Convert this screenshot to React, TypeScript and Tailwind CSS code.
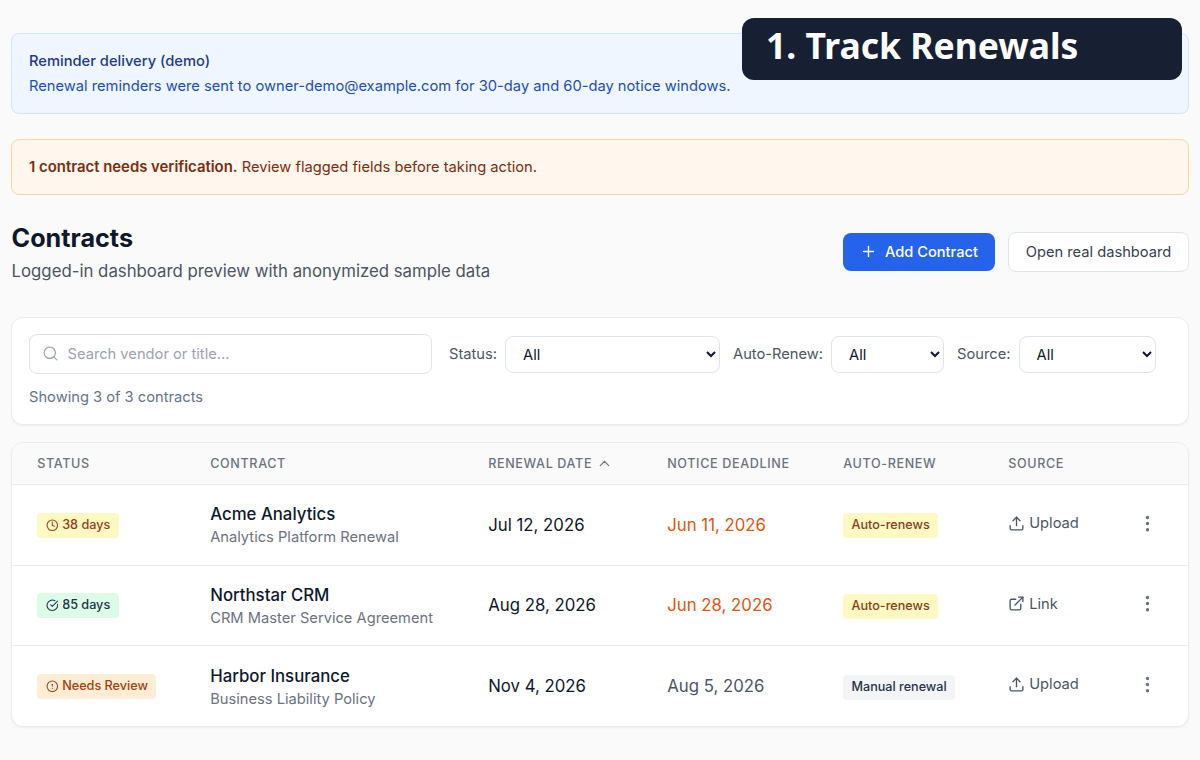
import {
  ChevronUp,
  CircleAlert,
  CircleCheckBig,
  Clock,
  EllipsisVertical,
  ExternalLink,
  Plus,
  Search,
  Upload,
} from 'lucide-react';

const contracts = [
  {
    status: '38 days',
    StatusIcon: Clock,
    statusClass: 'bg-[#fef9c3] text-[#964219]',
    name: 'Acme Analytics',
    title: 'Analytics Platform Renewal',
    renewal: 'Jul 12, 2026',
    deadline: 'Jun 11, 2026',
    deadlineClass: 'text-[#e0560f]',
    renew: 'Auto-renews',
    renewClass: 'bg-[#fef9c3] text-[#854020]',
    source: 'Upload',
    SourceIcon: Upload,
  },
  {
    status: '85 days',
    StatusIcon: CircleCheckBig,
    statusClass: 'bg-[#dcfce7] text-[#26324a]',
    name: 'Northstar CRM',
    title: 'CRM Master Service Agreement',
    renewal: 'Aug 28, 2026',
    deadline: 'Jun 28, 2026',
    deadlineClass: 'text-[#e0560f]',
    renew: 'Auto-renews',
    renewClass: 'bg-[#fef9c3] text-[#854020]',
    source: 'Link',
    SourceIcon: ExternalLink,
  },
  {
    status: 'Needs Review',
    StatusIcon: CircleAlert,
    statusClass: 'bg-[#ffedd5] text-[#a3410f]',
    name: 'Harbor Insurance',
    title: 'Business Liability Policy',
    renewal: 'Nov 4, 2026',
    deadline: 'Aug 5, 2026',
    deadlineClass: 'text-[#4b5563]',
    renew: 'Manual renewal',
    renewClass: 'bg-[#f3f4f6] text-[#26324a]',
    source: 'Upload',
    SourceIcon: Upload,
  },
];

const columns = 'grid grid-cols-[173px_278px_179px_176px_165px_1fr] pl-[25.2px]';

function Filter({ label, className }: { label: string; className: string }) {
  return (
    <label className="flex items-center text-[14.7px] text-[#4b5563]">
      <span className="pt-px">{label}</span>
      <select
        className={`h-[37px] rounded-lg border border-[#dfe3ea] bg-white pt-px pl-[13px] text-[14.7px] text-[#0f172a] ${className}`}
      >
        <option>All</option>
      </select>
    </label>
  );
}

export default function App() {
  return (
    <main className="relative h-[760px] w-[1200px] overflow-hidden bg-[#fafafa] px-[11px] pt-[33px] font-['Inter',sans-serif] text-[#0f172a]">
      <div className="absolute top-[18px] left-[742px] h-[62px] w-[440px] rounded-xl bg-[#172032] pl-[24px] font-['Noto_Sans',sans-serif] text-[35.5px] leading-[55px] font-bold text-white">
        1. Track Renewals
      </div>

      <div className="h-[81px] rounded-lg border border-[#cfe5fd] bg-[#eff6ff] px-[17px] pt-[17px] text-[14.7px] leading-[21px]">
        <p className="font-medium text-[#1e3a8a]">Reminder delivery (demo)</p>
        <p className="mt-1 text-[#1e4fb8]">
          Renewal reminders were sent to owner-demo@example.com for 30-day and 60-day notice windows.
        </p>
      </div>

      <div className="mt-[25px] h-[56px] rounded-lg border border-[#fbd5a0] bg-[#fff7ed] px-[17px] pt-[17px] text-[14.7px] leading-[21px] text-[#7c2d12]">
        <span className="text-[14.9px] font-semibold">1 contract needs verification.</span> Review flagged fields before taking action.
      </div>

      <div className="mt-[26px] flex h-[96px] items-start justify-between">
        <div className="pt-px pl-[0.5px]">
          <h1 className="text-[25.2px] leading-[33px] font-bold">Contracts</h1>
          <p className="mt-1 text-[16.8px] leading-[25px] text-[#4b5563]">
            Logged-in dashboard preview with anonymized sample data
          </p>
        </div>
        <div className="mt-[11px] flex items-center gap-[13px]">
          <button className="flex h-[38px] w-[152px] items-center rounded-lg bg-[#2563eb] pl-[17px] text-[14.64px] font-medium text-white">
            <Plus size={17} strokeWidth={1.9} className="mr-[8px] mb-px" />
            <span className="pt-px">Add Contract</span>
          </button>
          <button className="h-[40px] w-[181px] rounded-lg border border-[#dfe3ea] bg-white pt-px text-[14.7px] text-[#374151]">
            Open real dashboard
          </button>
        </div>
      </div>

      <div className="h-[108px] rounded-xl border border-[#e9ebef] bg-white px-[17px] pt-4 shadow-xs">
        <div className="flex items-center">
          <div className="mr-[17px] flex h-[40px] w-[403px] items-center rounded-lg border border-[#dfe3ea] pl-[11.5px]">
            <Search size={17} strokeWidth={1.7} className="mr-[9px] mb-px text-[#9ca3af]" />
            <input
              className="w-80 pt-px text-[14.7px] outline-none placeholder:text-[#9ca3af]"
              placeholder="Search vendor or title..."
            />
          </div>
          <Filter label="Status:" className="mr-[13px] ml-[8px] w-[215px]" />
          <Filter label="Auto-Renew:" className="mr-[13px] ml-[8px] w-[113px]" />
          <Filter label="Source:" className="ml-[8px] w-[137px]" />
        </div>
        <p className="mt-[13px] text-[14.7px] leading-[21px] text-[#64748b]">Showing 3 of 3 contracts</p>
      </div>

      <div className="mt-[17px] overflow-hidden rounded-xl border border-[#e9ebef] bg-white shadow-xs">
        <div
          className={`${columns} h-[42px] items-center border-b border-[#e9ebef] bg-[#fafafa] pt-px text-[12.6px] font-medium tracking-[0.63px] text-[#6b7280]`}
        >
          <span>STATUS</span>
          <span>CONTRACT</span>
          <span className="flex items-center gap-1">
            RENEWAL DATE
            <ChevronUp size={17} strokeWidth={1.8} className="mb-px" />
          </span>
          <span>NOTICE DEADLINE</span>
          <span>AUTO-RENEW</span>
          <span>SOURCE</span>
        </div>
        {contracts.map((c) => (
          <div
            key={c.name}
            className={`${columns} h-[80.5px] items-center border-b border-[#e9ebef] text-[16.8px] last:h-[80px] last:border-b-0`}
          >
            <div className="flex pt-px">
              <span
                className={`flex h-[25px] items-center gap-1 rounded px-[8.4px] text-[12.65px] font-medium ${c.statusClass}`}
              >
                <c.StatusIcon size={12.6} strokeWidth={2} />
                <span>{c.status}</span>
              </span>
            </div>
            <div className="pt-px">
              <p className="leading-[25px] font-medium">{c.name}</p>
              <p className="text-[14.7px] leading-[21px] text-[#6b7280]">{c.title}</p>
            </div>
            <span className="pt-px">{c.renewal}</span>
            <span className={`pt-px ${c.deadlineClass}`}>{c.deadline}</span>
            <div className="flex pt-[2px]">
              <span className={`flex h-[25px] items-center rounded px-[8.4px] text-[12.6px] font-medium ${c.renewClass}`}>
                {c.renew}
              </span>
            </div>
            <div className="flex items-center pb-[3px] text-[14.7px] text-[#4b5563]">
              <c.SourceIcon size={17} strokeWidth={1.9} className="mr-1" />
              <span className="flex-1">{c.source}</span>
              <EllipsisVertical size={21} className="mr-[30px] text-[#64748b]" />
            </div>
          </div>
        ))}
      </div>
    </main>
  );
}
